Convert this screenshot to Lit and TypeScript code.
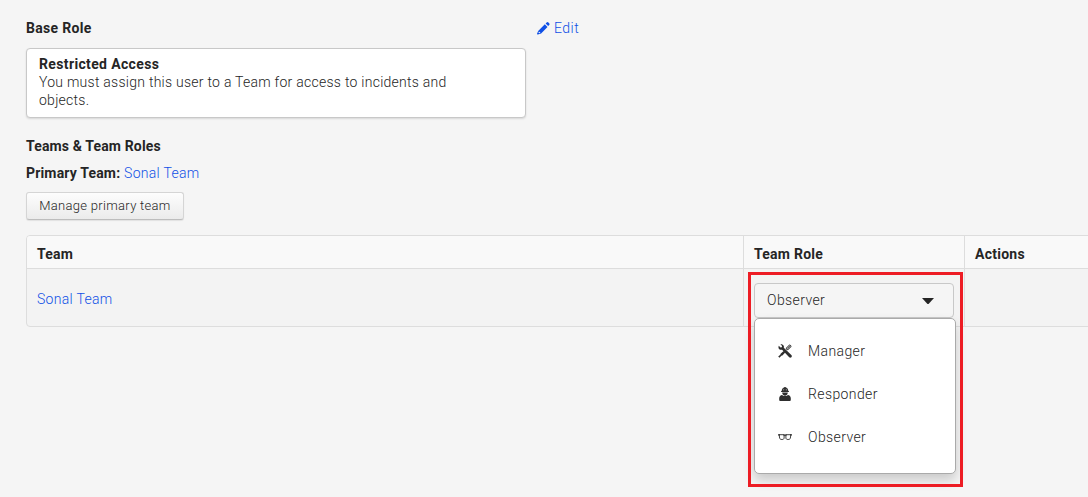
import { LitElement, html, css, svg } from "lit";
import { customElement } from "lit/decorators.js";

const pencil = svg`<path d="M8.600 1.500 9.600.5a1.300 1.300 0 0 1 1.800 0l.8.8a1.300 1.300 0 0 1 0 1.800l-1 1z"/><path fill-rule="evenodd" d="M7.800 2.300 10.500 5 4.100 11.400.9 12.400a.6.600 0 0 1-.8-.8L1.200 8.900zM1.900 9.500 1.500 10.800 2.500 11.200 3.500 10.800z"/>`;

const tools = svg`<path d="M.8 1.800 2.500 3.400 3.800 3.200 4.100 1.900 2.400.2C4 0 5.200.600 5.700 1.800c.3.700.3 1.300.1 1.900l7.500 7.300c.7.700.7 1.500.1 2.200-.7.600-1.600.6-2.200 0L4.100 5.700C2.600 6.200 1.200 5.500.6 4.200.3 3.500.4 2.500.8 1.800z"/><path d="M11.600.8 8.300 4.100 8.600 5.400 9.900 5.700 13.300 2.400z" fill="#bbb" stroke="currentColor" stroke-width=".9"/><path d="M9.700 4.400 12.500 1.600" stroke="currentColor" stroke-width=".6"/><path d="M5.600 7 7.200 8.600 4.400 11.400 3.300 11.700 1.500 13.800.2 12.600 2.300 10.700 2.600 9.800z"/>`;

const responder = svg`<path d="M2.700 4.100C2.700 1.900 4 .700 5.300.500V0h1.400v.500C8 .700 9.300 1.900 9.300 4.100l.7.200v.800H2v-.8z"/><path d="M4.700 1.900v1.600M7.300 1.900v1.600" stroke="#aaa" stroke-width=".7"/><path d="M3.200 5.600h5.600C8.800 7.500 7.600 8.700 6 8.700S3.200 7.500 3.200 5.600z"/><path d="M.2 11.300C.2 9.200 1.500 8 3.100 7.900 4.700 9.500 7.300 9.500 8.900 7.900c1.600.1 2.900 1.300 2.900 3.400v1.400c0 .7-.5 1.300-1.200 1.300H1.400c-.7 0-1.200-.6-1.200-1.300z"/>`;

const glasses = svg`<g fill="none" stroke="currentColor"><path d="M1.200.7h4.900V4C6 5 5.300 5.500 4 5.500S1.700 5 1.600 4zM7.900.7h4.900L12.400 4c-.1 1-1.100 1.500-2.400 1.500S8 5 7.900 4z" stroke-width=".9"/><path d="M0 .8h2M5.500 1.100h3M12 .8h2" stroke-width="1.300"/></g>`;

@customElement("app-root")
export class AppRoot extends LitElement {
  static styles = css`
    :host {
      display: block;
      box-sizing: border-box;
      width: 1088px;
      height: 497px;
      overflow: hidden;
      padding: 19px 0 0 26px;
      background: #f5f5f5;
      color: #252525;
      font: 14px/18px Roboto, "Liberation Sans", sans-serif;
      letter-spacing: 0.3px;
    }
    * { box-sizing: border-box; }
    svg { display: block; fill: currentColor; overflow: visible; }
    a { color: #1050e6; text-decoration: none; }
    .light { font-weight: 300; }
    .strong { font-weight: 700; }
    .top { display: flex; }
    .base { width: 500px; margin-right: 11px; }
    .card {
      margin-top: 11px;
      height: 70px;
      padding: 6px 70px 0 12px;
      background: #fff;
      border: 1px solid #c8c8c8;
      border-radius: 4px;
      box-shadow: 0 1px 2px rgba(0, 0, 0, 0.12);
    }
    .card .light { letter-spacing: 0.26px; }
    .card .strong { letter-spacing: 0.36px; }
    .edit { display: flex; height: 18px; align-items: center; gap: 4px; font-weight: 300; letter-spacing: 0.5px; }
    .teams { margin-top: 19px; letter-spacing: 0.14px; }
    .primary { margin-top: 9px; }
    .primary .strong { letter-spacing: 0.17px; }
    .button {
      display: block;
      width: 158px;
      height: 28px;
      margin-top: 10px;
      padding: 0;
      border: 1px solid #d5d5d5;
      border-bottom-color: #bdbdbd;
      border-radius: 3px;
      background: linear-gradient(#fdfdfd, #ebebeb);
      box-shadow: 0 1px 1px rgba(0, 0, 0, 0.08);
      color: #252525;
      font: inherit;
      font-size: 13px;
      font-weight: 300;
      letter-spacing: 0.3px;
    }
    .table {
      display: grid;
      grid-template-columns: 717px 221px 140px;
      grid-template-rows: 33px 57px;
      width: 1080px;
      margin-top: 15px;
      border: 1px solid #ddd;
      border-radius: 4px;
      background: #f3f3f3;
    }
    .head, .cell { display: flex; align-items: center; padding-left: 10px; border-right: 1px solid #ddd; }
    .head { background: #f9f9f9; border-bottom: 1px solid #ddd; padding-top: 4px; letter-spacing: 0.25px; }
    .head:first-child { border-top-left-radius: 3px; }
    .cell { position: relative; }
    .cell.link { padding: 3px 0 0 10px; }
    .role { align-items: flex-start; padding-top: 14px; }
    .select {
      display: flex;
      align-items: center;
      justify-content: space-between;
      width: 200px;
      height: 35px;
      padding: 0 19px 0 12px;
      border: 1px solid #c8c8c8;
      border-radius: 4px;
      background: #f5f5f5;
      letter-spacing: 0.4px;
    }
    .select span { padding-bottom: 1px; }
    .menu {
      position: absolute;
      top: 49px;
      left: 10px;
      width: 202px;
      height: 156px;
      padding-top: 11px;
      border: 1px solid #aaa;
      border-radius: 5px;
      background: #fff;
      box-shadow: 0 6px 12px rgba(0, 0, 0, 0.18);
      letter-spacing: 0.4px;
    }
    .item { display: flex; align-items: center; height: 43px; padding-left: 23px; }
    .item .name { padding-bottom: 2px; }
    .icon { display: flex; justify-content: center; width: 14px; margin: 0 16px 1px 0; color: #2e2e2e; }
    .frame {
      position: absolute;
      top: 3px;
      left: 4px;
      width: 215px;
      height: 215px;
      border: 3px solid #ed1c24;
    }
  `;

  private roles = [
    { name: "Manager", icon: html`<svg width="14" height="14" viewBox="0 0 14 14">${tools}</svg>` },
    { name: "Responder", icon: html`<svg width="12" height="14" viewBox="0 0 12 14">${responder}</svg>` },
    { name: "Observer", icon: html`<svg width="14" height="6" viewBox="0 0 14 6">${glasses}</svg>` },
  ];

  render() {
    return html`
      <div class="top">
        <div class="base">
          <div class="strong">Base Role</div>
          <div class="card">
            <div class="strong">Restricted Access</div>
            <div class="light">You must assign this user to a Team for access to incidents and objects.</div>
          </div>
        </div>
        <a class="edit"><svg width="13" height="13" viewBox="0 0 13 13">${pencil}</svg><span>Edit</span></a>
      </div>
      <div class="teams strong">Teams &amp; Team Roles</div>
      <div class="primary"><span class="strong">Primary Team:</span> <a class="light">Sonal Team</a></div>
      <button class="button">Manage primary team</button>
      <div class="table">
        <div class="head strong">Team</div>
        <div class="head strong">Team Role</div>
        <div class="head strong">Actions</div>
        <div class="cell link"><a class="light">Sonal Team</a></div>
        <div class="cell role light">
          <div class="select">
            <span>Observer</span>
            <svg width="12" height="6" viewBox="0 0 12 6"><path d="M0 0h12L7 5.500a1.400 1.400 0 0 1-2 0z" /></svg>
          </div>
          <div class="menu">
            ${this.roles.map((r) => html`<div class="item"><span class="icon">${r.icon}</span><span class="name">${r.name}</span></div>`)}
          </div>
          <div class="frame"></div>
        </div>
        <div class="cell"></div>
      </div>
    `;
  }
}
